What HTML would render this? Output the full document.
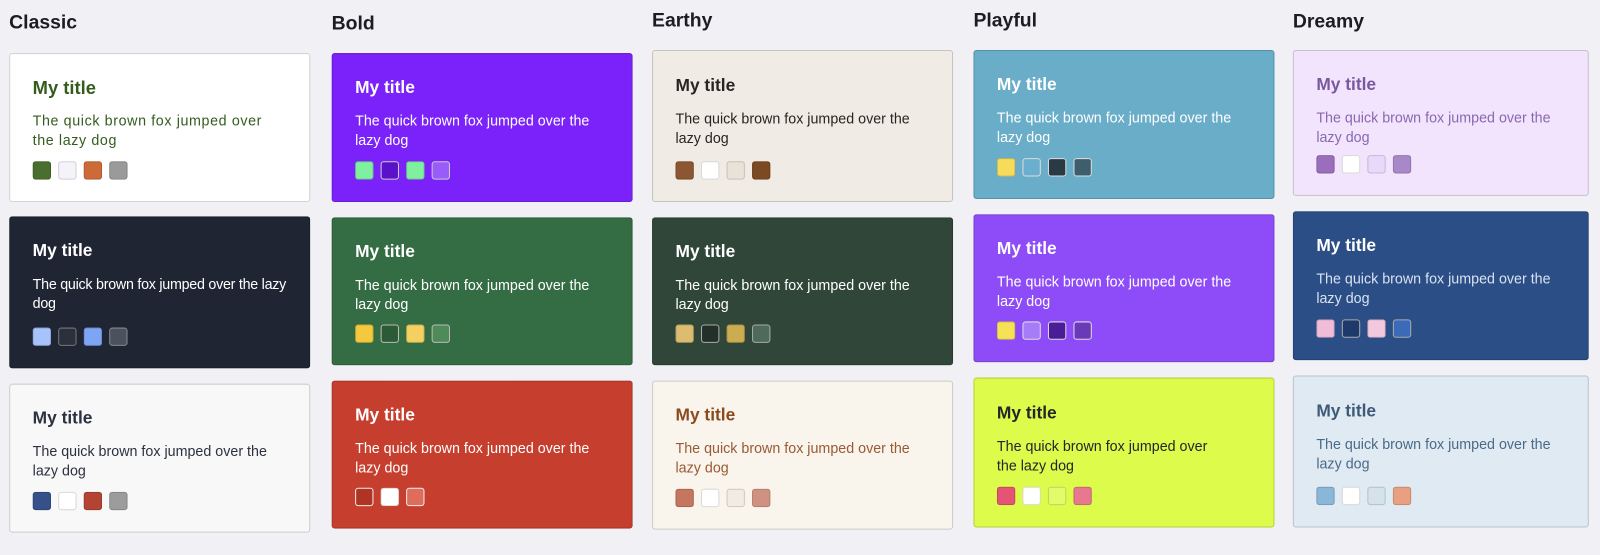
<!DOCTYPE html>
<html><head><meta charset="utf-8"><style>
body{margin:0;width:1600px;height:555px;background:#f1f0f5;font-family:"Liberation Sans",sans-serif;overflow:hidden}
#w{position:relative;width:1568px;height:544px;transform:scale(1.0204);transform-origin:0 0}
h2{position:absolute;margin:0;font-size:19px;font-weight:bold;color:#1c1c22}
.c{position:absolute;box-sizing:border-box;border:1px solid rgba(0,0,0,.17);border-radius:3px;padding:0 22px}
.t{font-size:17px;font-weight:bold;margin-top:23px;line-height:20px}
.p{font-size:14px;line-height:19px;margin-top:13px;white-space:nowrap}
.s{position:absolute;left:22px;bottom:21px;display:flex;gap:7px}
.s i{width:18px;height:18px;border-radius:3px;box-sizing:border-box;border:1px solid rgba(0,0,0,.15)}
</style></head><body><div id="w">
<h2 style="left:9px;top:12px">Classic</h2>
<h2 style="left:325px;top:13px">Bold</h2>
<h2 style="left:639px;top:10px">Earthy</h2>
<h2 style="left:954px;top:10px">Playful</h2>
<h2 style="left:1267px;top:11px">Dreamy</h2>

<div class="c" style="left:9px;top:52px;width:295px;height:146px;background:#fff;color:#345c1e"><div class="t" style="font-size:18px">My title</div><div class="p" style="letter-spacing:.6px">The quick brown fox jumped over<br>the lazy dog</div><div class="s"><i style="background:#4a6e2e"></i><i style="background:#f5f3fa"></i><i style="background:#cc6a38"></i><i style="background:#9a9a9a"></i></div></div>
<div class="c" style="left:9px;top:212px;width:295px;height:149px;background:#1f2532;color:#fff"><div class="t">My title</div><div class="p" style="letter-spacing:-.25px">The quick brown fox jumped over the lazy<br>dog</div><div class="s"><i style="background:#a6c4fb"></i><i style="background:#2a303c;border-color:#777"></i><i style="background:#7ea5f4"></i><i style="background:#4a5260;border-color:#888"></i></div></div>
<div class="c" style="left:9px;top:376px;width:295px;height:146px;background:#f8f8f8;color:#2c3040"><div class="t">My title</div><div class="p">The quick brown fox jumped over the<br>lazy dog</div><div class="s"><i style="background:#36508a"></i><i style="background:#fff"></i><i style="background:#b34434"></i><i style="background:#9c9c9c"></i></div></div>

<div class="c" style="left:325px;top:52px;width:295px;height:146px;background:#7b22fa;color:#fff"><div class="t">My title</div><div class="p">The quick brown fox jumped over the<br>lazy dog</div><div class="s"><i style="background:#7ef0a0"></i><i style="background:#5a12c8;border-color:#ccc"></i><i style="background:#7ef0a0"></i><i style="background:#9a5cf8;border-color:#ccc"></i></div></div>
<div class="c" style="left:325px;top:213px;width:295px;height:145px;background:#346c43;color:#fff"><div class="t">My title</div><div class="p">The quick brown fox jumped over the<br>lazy dog</div><div class="s"><i style="background:#f4c940"></i><i style="background:#2c5a36;border-color:#bbb"></i><i style="background:#f4d060"></i><i style="background:#4e8a5a;border-color:#bbb"></i></div></div>
<div class="c" style="left:325px;top:373px;width:295px;height:145px;background:#c63f2e;color:#fff"><div class="t">My title</div><div class="p">The quick brown fox jumped over the<br>lazy dog</div><div class="s"><i style="background:#b03424;border-color:#eee"></i><i style="background:#fff"></i><i style="background:#e06c5c;border-color:#eee"></i></div></div>

<div class="c" style="left:639px;top:49px;width:295px;height:149px;background:#f0ebe4;color:#2a2420"><div class="t" style="margin-top:24px">My title</div><div class="p">The quick brown fox jumped over the<br>lazy dog</div><div class="s"><i style="background:#8c5632"></i><i style="background:#fff"></i><i style="background:#e8e2d8"></i><i style="background:#7c4a22"></i></div></div>
<div class="c" style="left:639px;top:213px;width:295px;height:145px;background:#2f4638;color:#fff"><div class="t">My title</div><div class="p">The quick brown fox jumped over the<br>lazy dog</div><div class="s"><i style="background:#dcbc70"></i><i style="background:#22302a;border-color:#aaa"></i><i style="background:#ccac50"></i><i style="background:#4e6a58;border-color:#aaa"></i></div></div>
<div class="c" style="left:639px;top:373px;width:295px;height:146px;background:#f9f4ec;color:#8a4a20"><div class="t">My title</div><div class="p" style="color:#9a5a34">The quick brown fox jumped over the<br>lazy dog</div><div class="s"><i style="background:#c4765e"></i><i style="background:#fff"></i><i style="background:#f2ebe2"></i><i style="background:#d09280"></i></div></div>

<div class="c" style="left:954px;top:49px;width:295px;height:146px;background:#69adc9;color:#fff"><div class="t">My title</div><div class="p">The quick brown fox jumped over the<br>lazy dog</div><div class="s"><i style="background:#f6dc5a"></i><i style="background:#6aaed0;border-color:#ddd"></i><i style="background:#2a3a44;border-color:#ddd"></i><i style="background:#3e5e6e;border-color:#ddd"></i></div></div>
<div class="c" style="left:954px;top:210px;width:295px;height:145px;background:#8e4cf8;color:#fff"><div class="t">My title</div><div class="p">The quick brown fox jumped over the<br>lazy dog</div><div class="s"><i style="background:#f6e254"></i><i style="background:#a87cf8;border-color:#ddd"></i><i style="background:#4a1c98;border-color:#ddd"></i><i style="background:#6a3ab8;border-color:#ddd"></i></div></div>
<div class="c" style="left:954px;top:370px;width:295px;height:147px;background:#dcfb4a;color:#22262a"><div class="t" style="margin-top:24px">My title</div><div class="p">The quick brown fox jumped over<br>the lazy dog</div><div class="s"><i style="background:#e55474"></i><i style="background:#fff"></i><i style="background:#e2fb6a"></i><i style="background:#e8788e"></i></div></div>

<div class="c" style="left:1267px;top:49px;width:290px;height:143px;background:#f2e4fd;color:#7a58a0"><div class="t">My title</div><div class="p" style="color:#8a68b0">The quick brown fox jumped over the<br>lazy dog</div><div class="s"><i style="background:#9a6ebc"></i><i style="background:#fff"></i><i style="background:#e8d8fa"></i><i style="background:#a888c8"></i></div></div>
<div class="c" style="left:1267px;top:207px;width:290px;height:146px;background:#2b4e87;color:#fff"><div class="t">My title</div><div class="p" style="color:#d8e2f0">The quick brown fox jumped over the<br>lazy dog</div><div class="s"><i style="background:#f0bcd8"></i><i style="background:#1e3a6a;border-color:#aaa"></i><i style="background:#f4c8dc"></i><i style="background:#3a6ab8;border-color:#aaa"></i></div></div>
<div class="c" style="left:1267px;top:368px;width:290px;height:149px;background:#e0eaf3;color:#3e5a78"><div class="t" style="margin-top:24px">My title</div><div class="p" style="color:#4a6a88">The quick brown fox jumped over the<br>lazy dog</div><div class="s"><i style="background:#8ab6d8"></i><i style="background:#fff"></i><i style="background:#d4e2ec"></i><i style="background:#e8a080"></i></div></div>
</div></body></html>
